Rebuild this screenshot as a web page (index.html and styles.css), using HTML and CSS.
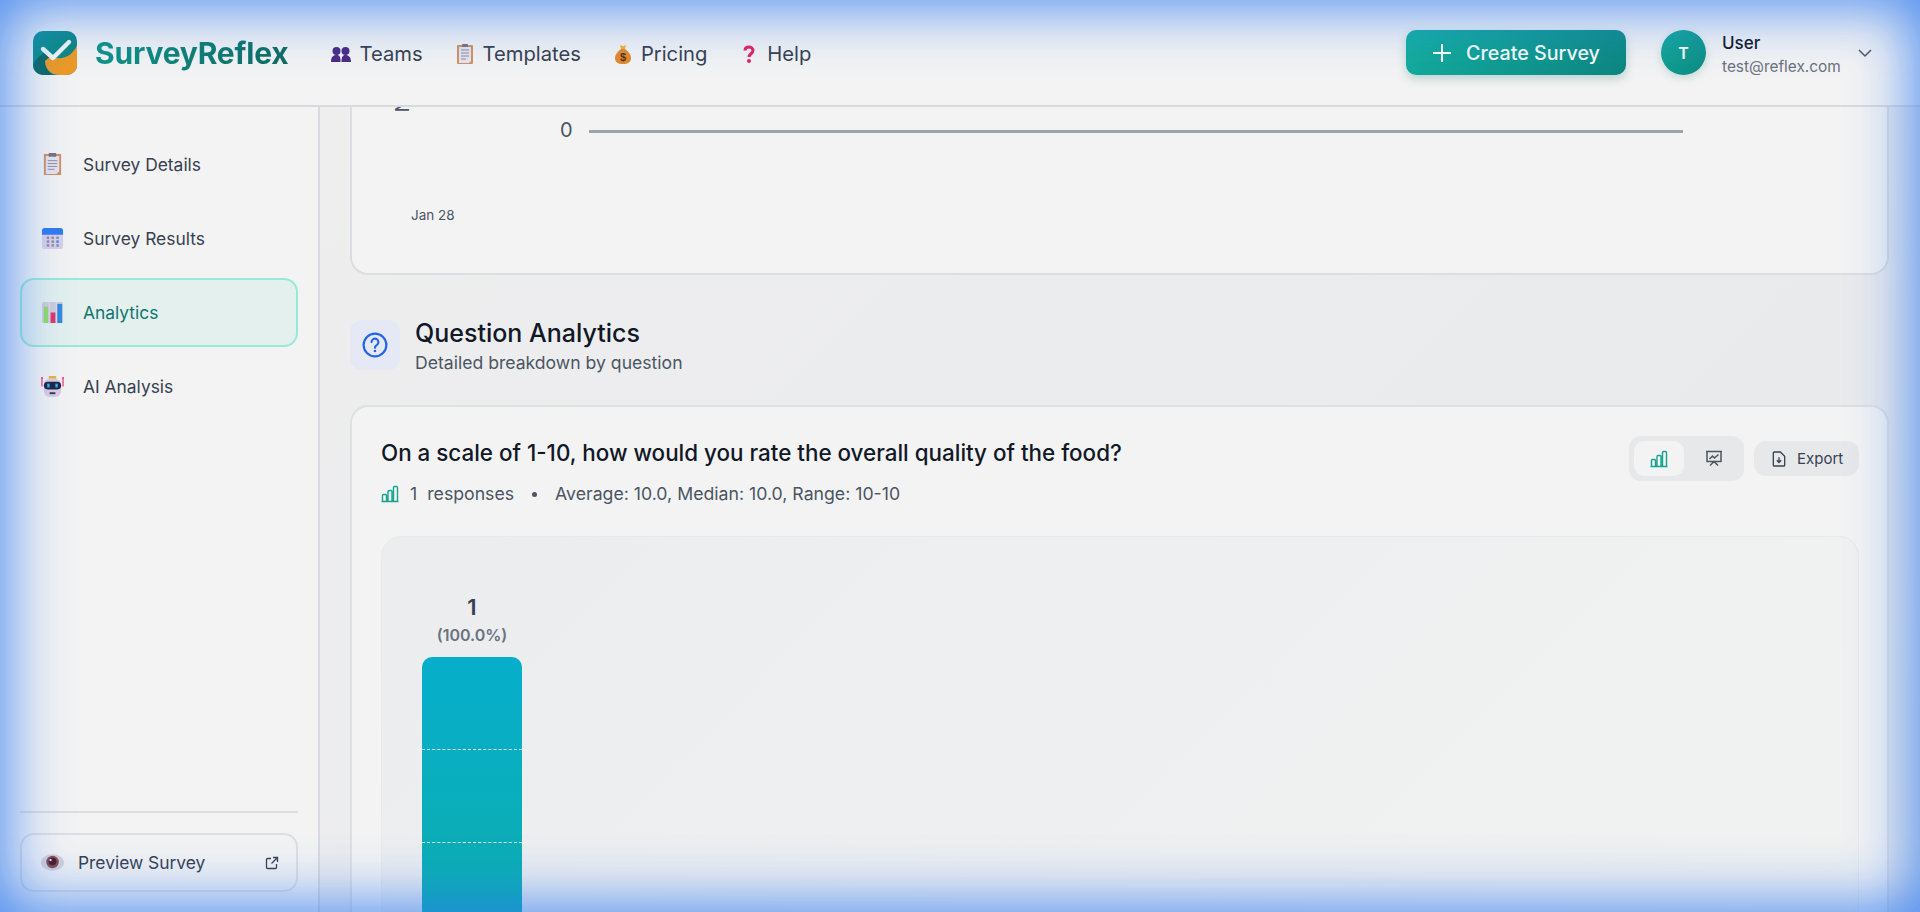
FILE: index.html
```html
<!DOCTYPE html>
<html lang="en">
<head>
<meta charset="utf-8">
<title>SurveyReflex</title>
<link rel="stylesheet" href="styles.css">
</head>
<body>
<div class="app">
  <header class="header">
    <a class="brand">
      <svg class="logo" viewBox="0 0 44 44">
        <defs><linearGradient id="lg" x1="0" y1="0" x2="1" y2="1"><stop offset="0" stop-color="#0a9490"/><stop offset="1" stop-color="#0f7f74"/></linearGradient></defs>
        <rect width="44" height="44" rx="10" fill="url(#lg)"/>
        <path d="M0 34C4 26 10 21 17 20L14 35C14 40 18 44 22 44H10A10 10 0 0 1 0 34Z" fill="#0b6862"/>
        <path d="M44 14C40 24 32 28 24 27C19 26 15 26 12 30C12 38 18 44 26 44H34A10 10 0 0 0 44 34Z" fill="#ee9a24"/>
        <path d="M10 18L20 27L36 11" fill="none" stroke="#f4f8f7" stroke-width="4.400" stroke-linecap="round" stroke-linejoin="round"/>
      </svg>
      <span class="brand-name">SurveyReflex</span>
    </a>
    <nav class="nav">
      <a class="nav-link">
        <svg class="em" viewBox="0 0 20 20"><g fill="#4b2a86"><circle cx="5.500" cy="7" r="4"/><circle cx="14.500" cy="7" r="4"/><path d="M0 18c0-5 2-7 5.500-7S9.500 13 9.500 18z"/><path d="M10.500 18c0-5 1-7 4-7S20 13 20 18z"/></g></svg>
        <span>Teams</span>
      </a>
      <a class="nav-link">
        <svg class="em" viewBox="0 0 20 20"><rect x="2" y="1" width="16" height="19" rx="1" fill="#d29163"/><path d="M4 3h12v14l-2 2H4z" fill="#e6e3ee"/><rect x="7" y="0" width="6" height="3" rx="1" fill="#77727f"/><path d="M6 6h8M6 9h8M6 12h8M6 15h5" stroke="#908c9a"/></svg>
        <span>Templates</span>
      </a>
      <a class="nav-link">
        <svg class="em" viewBox="0 0 20 20"><path d="M7 1l3 1.200L13 1l-1 4H8z" fill="#f2b02e"/><path d="M8 5h4c4 3 6 6 6 9 0 4-3 6-8 6s-8-2-8-6c0-3 2-6 6-9z" fill="#e08a2c"/><text x="10" y="16.500" class="bag">$</text></svg>
        <span>Pricing</span>
      </a>
      <a class="nav-link">
        <svg class="em" viewBox="0 0 20 20"><path d="M6 6.500C6 4 8 3 10 3s4 1.200 4 3.500c0 3-4 3.500-4 6.500" fill="none" stroke="#e5215f" stroke-width="3"/><circle cx="10" cy="17" r="2" fill="#e5215f"/></svg>
        <span>Help</span>
      </a>
    </nav>
    <div class="header-right">
      <button class="create">
        <svg class="plus" viewBox="0 0 20 20"><path d="M10 1v18M1 10h18" stroke="#fff" stroke-width="2" fill="none"/></svg>
        <span>Create Survey</span>
      </button>
      <div class="user">
        <div class="avatar">T</div>
        <div class="user-text">
          <div class="user-name">User</div>
          <div class="user-mail">test@reflex.com</div>
        </div>
        <svg class="chev" viewBox="0 0 16 10"><path d="M2 2l6 6 6-6" fill="none" stroke="#4b5563" stroke-width="1.500"/></svg>
      </div>
    </div>
  </header>

  <div class="body">
    <aside class="sidebar">
      <div class="side-list">
        <a class="side-item">
          <svg class="side-em" viewBox="0 0 24 24"><rect x="3" y="1" width="18" height="22" fill="#d29163"/><path d="M5 3h14v16l-3 3H5z" fill="#e6e3ee"/><rect x="8" y="0" width="8" height="4" rx="1" fill="#77727f"/><path d="M7 8h10M7 11h10M7 14h10M7 17h7" stroke="#908c9a"/></svg>
          <span>Survey Details</span>
        </a>
        <a class="side-item">
          <svg class="side-em" viewBox="0 0 24 24"><rect x="1" y="1" width="22" height="22" rx="3" fill="#d8d0e8"/><path d="M1 8V4a3 3 0 0 1 3-3h16a3 3 0 0 1 3 3v4z" fill="#2f7cf0"/><g fill="#8f8a9c"><rect x="6" y="10" width="2.500" height="2.500"/><rect x="11" y="10" width="2.500" height="2.500"/><rect x="6" y="14" width="2.500" height="2.500"/><rect x="11" y="14" width="2.500" height="2.500"/><rect x="6" y="18" width="2.500" height="2.500"/><rect x="11" y="18" width="2.500" height="2.500"/><rect x="16" y="10" width="2.500" height="2.500"/><rect x="16" y="18" width="2.500" height="2.500"/></g><rect x="16" y="14" width="2.500" height="2.500" fill="#2f8cf0"/></svg>
          <span>Survey Results</span>
        </a>
        <a class="side-item active">
          <svg class="side-em" viewBox="0 0 24 24"><rect x="1" y="1" width="22" height="22" rx="2" fill="#cfccd8"/><path d="M8.500 1v22M16 1v22" stroke="#e2e0e8"/><rect x="3" y="6" width="4.500" height="17" fill="#8fdc6a"/><rect x="10" y="12" width="5" height="11" fill="#e0356f"/><rect x="17" y="3" width="5" height="20" fill="#2f8ae0"/></svg>
          <span>Analytics</span>
        </a>
        <a class="side-item">
          <svg class="side-em" viewBox="0 0 24 24"><path d="M1 3v9M23 3v9" stroke="#ee2f70" stroke-width="1.200"/><circle cx="1" cy="3" r="1" fill="#ee2f70"/><circle cx="23" cy="3" r="1" fill="#ee2f70"/><rect x="8" y="1" width="8" height="3" rx="1" fill="#eeb52c"/><rect x="3" y="4" width="18" height="19" rx="6" fill="#d9cfe0"/><rect x="3" y="7" width="18" height="8" rx="4" fill="#23233f"/><rect x="6.500" y="9" width="2.500" height="4" fill="#2fb6f0"/><rect x="15" y="9" width="2.500" height="4" fill="#2fb6f0"/><rect x="9" y="18" width="6" height="2" fill="#3a3450"/></svg>
          <span>AI Analysis</span>
        </a>
      </div>
      <div class="side-foot">
        <a class="preview">
          <svg class="side-em" viewBox="0 0 24 18"><ellipse cx="12" cy="9" rx="12" ry="8.500" fill="#d5d2dc"/><circle cx="12" cy="8.500" r="6.500" fill="#8a4a46"/><circle cx="12" cy="8" r="4" fill="#4a1626"/><circle cx="10" cy="6.500" r="1.200" fill="#fff"/></svg>
          <span class="preview-text">Preview Survey</span>
          <svg class="ext" viewBox="0 0 14 14"><path d="M6 2.500H2.500a1 1 0 0 0-1 1v8a1 1 0 0 0 1 1h8a1 1 0 0 0 1-1V8M8 1.500h4.500V6M12.500 1.500L6.500 7.500" fill="none" stroke="#374151" stroke-width="1.300"/></svg>
        </a>
      </div>
    </aside>

    <main class="main">
      <section class="chart-card">
        <span class="axis-title">N</span>
        <div class="zero-row">
          <span class="zero">0</span>
          <span class="zero-line"></span>
        </div>
        <div class="tick">Jan 28</div>
      </section>

      <div class="section-head">
        <div class="section-icon">
          <svg viewBox="0 0 24 24" class="q-icon"><circle cx="12" cy="12" r="10.500" fill="none" stroke="#2563eb" stroke-width="2"/><path d="M8.800 9.300a3.200 3.200 0 1 1 4.800 2.800c-1 .6-1.600 1.200-1.600 2.400" fill="none" stroke="#2563eb" stroke-width="2" stroke-linecap="round"/><circle cx="12" cy="17.500" r="1.200" fill="#2563eb"/></svg>
        </div>
        <div>
          <h2 class="section-title">Question Analytics</h2>
          <p class="section-sub">Detailed breakdown by question</p>
        </div>
      </div>

      <section class="q-card">
        <div class="q-head">
          <div class="q-info">
            <h3 class="q-title">On a scale of 1-10, how would you rate the overall quality of the food?</h3>
            <div class="q-meta">
              <svg class="meta-icon" viewBox="0 0 18 18"><path d="M1.500 16.500v-6a1 1 0 0 1 1-1h2a1 1 0 0 1 1 1v6zM7 16.500V6.500a1 1 0 0 1 1-1h2a1 1 0 0 1 1 1v10zM12.500 16.500V2.500a1 1 0 0 1 1-1h2a1 1 0 0 1 1 1v14zM0.500 16.500h17" fill="none" stroke="#14a38f" stroke-width="1.400"/></svg>
              <span class="count">1</span>
              <span>responses</span>
              <span class="dot"></span>
              <span>Average: 10.0, Median: 10.0, Range: 10-10</span>
            </div>
          </div>
          <div class="q-actions">
            <div class="toggle">
              <button class="toggle-btn on"><svg class="meta-icon" viewBox="0 0 18 18"><path d="M1.500 16.500v-6a1 1 0 0 1 1-1h2a1 1 0 0 1 1 1v6zM7 16.500V6.500a1 1 0 0 1 1-1h2a1 1 0 0 1 1 1v10zM12.500 16.500V2.500a1 1 0 0 1 1-1h2a1 1 0 0 1 1 1v14zM0.500 16.500h17" fill="none" stroke="#14a38f" stroke-width="1.400"/></svg></button>
              <button class="toggle-btn"><svg class="meta-icon" viewBox="0 0 18 18"><path d="M1 1.500h16M2 1.500v10h14v-10M5 15.500l4-4 4 4M4.500 9l3-3 2 2 4-3.500" fill="none" stroke="#4b5563" stroke-width="1.500"/></svg></button>
            </div>
            <button class="export">
              <svg class="exp-icon" viewBox="0 0 16 18"><path d="M2.500 1h7l5 5v10a1 1 0 0 1-1 1h-11a1 1 0 0 1-1-1V2a1 1 0 0 1 1-1z" fill="none" stroke="#374151" stroke-width="1.500"/><path d="M8 7v6M5.500 10.500L8 13l2.500-2.500" fill="none" stroke="#374151" stroke-width="1.500"/></svg>
              <span>Export</span>
            </button>
          </div>
        </div>

        <div class="panel">
          <div class="bar-col">
            <div class="bar-count">1</div>
            <div class="bar-pct">(100.0%)</div>
            <div class="bar">
              <div class="seg"></div>
              <div class="seg"></div>
              <div class="seg"></div>
            </div>
          </div>
        </div>
      </section>
    </main>
  </div>
</div>
<div class="glow"></div>
</body>
</html>
```

FILE: styles.css
```css
* { box-sizing: border-box; }
html, body { margin: 0; height: 912px; overflow: hidden; }
body { font-family: Inter, "Noto Sans", sans-serif; color: #1f2937; background: #eaebed; }
h2, h3, p { margin: 0; }
button { font: inherit; border: 0; cursor: pointer; }

.app { display: flex; flex-direction: column; height: 912px; }

.header { height: 107px; flex: none; display: flex; align-items: center; padding: 0 47px 0 33px; background: #f3f3f3; border-bottom: 2px solid #d9dae0; position: relative; z-index: 2; }
.brand { display: flex; align-items: center; gap: 18px; }
.logo { width: 44px; height: 44px; flex: none; }
.brand-name { font-size: 30px; font-weight: 700; letter-spacing: -0.2px; background: linear-gradient(90deg, #0d9488, #0f6b60); -webkit-background-clip: text; background-clip: text; color: transparent; }
.nav { display: flex; gap: 32px; margin-left: 43px; padding-top: 2px; }
.nav-link { display: flex; align-items: center; gap: 8px; font-size: 20.200px; color: #374151; }
.em { width: 20px; height: 20px; flex: none; }
.bag { font: 700 11px "Liberation Sans", sans-serif; fill: #5e3210; text-anchor: middle; }
.header-right { margin-left: auto; display: flex; align-items: center; gap: 35px; }
.create { width: 220px; height: 45px; display: flex; align-items: center; justify-content: center; gap: 14px; border-radius: 10px; color: #f4fbfa; font-size: 19.700px; font-weight: 500; background: linear-gradient(135deg, #14b0a0, #0d8580); box-shadow: 0 4px 10px rgba(13, 120, 110, .25); }
.plus { width: 20px; height: 20px; }
.user { display: flex; align-items: center; gap: 16px; }
.avatar { width: 45px; height: 45px; border-radius: 50%; display: flex; align-items: center; justify-content: center; background: linear-gradient(135deg, #14ab9b, #0d8a80); color: #fff; font-size: 16px; font-weight: 600; box-shadow: 0 3px 8px rgba(13, 120, 110, .2); }
.user-text { width: 119px; padding-top: 4px; }
.user-name { font-size: 17px; font-weight: 550; color: #111827; line-height: 22px; }
.user-mail { font-size: 15.400px; color: #6b7280; line-height: 22px; margin-top: 2px; }
.chev { width: 16px; height: 10px; }

.body { flex: 1; display: flex; min-height: 0; }

.sidebar { width: 320px; flex: none; display: flex; flex-direction: column; justify-content: space-between; padding: 23px 20px 20px; background: #f3f3f3; border-right: 2px solid #d9dae0; }
.side-list { display: flex; flex-direction: column; gap: 5px; }
.side-item { height: 69px; display: flex; align-items: center; gap: 19px; padding: 0 19px; border: 2px solid transparent; border-radius: 14px; font-size: 17.400px; font-weight: 400; color: #374151; }
.side-item.active { background: #e4f0ee; border-color: #99e9d9; color: #0f766e; }
.side-em { width: 23px; height: 23px; flex: none; }
.side-foot { border-top: 2px solid #dcdde2; padding-top: 20px; }
.preview { height: 59px; display: flex; align-items: center; padding: 0 17px 0 19px; border: 2px solid #dcdfe6; border-radius: 14px; font-size: 17.400px; font-weight: 400; color: #374151; }
.preview-text { margin-left: 14px; flex: 1; }
.ext { width: 14px; height: 14px; }

.main { flex: 1; min-width: 0; padding: 0 31px 0 30px; overflow: hidden; background: linear-gradient(135deg, #eeeeef, #e8e9eb); }

.chart-card { position: relative; height: 168px; background: #f3f3f3; border: 2px solid #dcdde2; border-top: 0; border-radius: 0 0 18px 18px; padding: 11px 0 0 0; overflow: hidden; }
.axis-title { position: absolute; left: 43px; top: -12px; font-size: 18px; color: #4b5563; transform: rotate(90deg); }
.zero-row { display: flex; align-items: center; padding-left: 208px; gap: 16px; }
.zero { font-size: 20px; color: #4b5563; line-height: 24px; }
.zero-line { width: 1094px; height: 3px; margin-top: 2px; background: #9ca3af; }
.tick { margin: 63px 0 0 59px; font-size: 13.500px; color: #4b5563; line-height: 20px; }

.section-head { display: flex; align-items: flex-start; gap: 15px; margin-top: 45px; }
.section-icon { width: 50px; height: 50px; display: flex; align-items: center; justify-content: center; border-radius: 12px; background: #e4e9f5; }
.q-icon { width: 26px; height: 26px; }
.section-title { font-size: 25px; font-weight: 550; color: #111827; line-height: 26px; }
.section-sub { font-size: 17.600px; color: #4b5563; line-height: 22px; margin-top: 6px; }

.q-card { margin-top: 31px; background: #f3f3f3; border: 2px solid #dfe0e4; border-radius: 18px; padding: 29px 28px 40px 29px; }
.q-head { display: flex; justify-content: space-between; align-items: flex-start; }
.q-title { font-size: 22.400px; font-weight: 550; color: #111827; line-height: 34px; }
.q-meta { display: flex; align-items: center; margin-top: 12px; font-size: 17.700px; color: #4b5563; line-height: 24px; }
.meta-icon { width: 18px; height: 18px; flex: none; }
.count { margin: 0 10px 0 11px; }
.dot { width: 5px; height: 5px; border-radius: 50%; background: #4b5563; margin: 0 18px; }
.q-actions { display: flex; align-items: flex-start; gap: 10px; }
.toggle { display: flex; gap: 5px; padding: 5px; border-radius: 12px; background: #e7e8ea; }
.toggle-btn { width: 50px; height: 35px; display: flex; align-items: center; justify-content: center; border-radius: 10px; background: transparent; padding: 0; }
.toggle-btn.on { background: #f3f3f3; }
.export { width: 105px; height: 35px; margin-top: 5px; display: flex; align-items: center; gap: 11px; padding: 0 0 0 18px; border-radius: 12px; background: #e7e8ea; color: #374151; font-size: 15px; }
.exp-icon { width: 14px; height: 16px; flex: none; }

.panel { margin-top: 30px; height: 520px; padding: 57px 40px 0; border: 1px solid #e8e9eb; border-radius: 20px; background: linear-gradient(135deg, #ecedef, #f1f2f1); }
.bar-col { width: 100px; display: flex; flex-direction: column; align-items: center; }
.bar-count { font-size: 22px; font-weight: 600; color: #374151; line-height: 26px; }
.bar-pct { font-size: 16px; font-weight: 600; color: #6b7280; line-height: 20px; margin-top: 5px; }
.bar { width: 100px; height: 400px; margin-top: 12px; border-radius: 10px 10px 0 0; overflow: hidden; background: linear-gradient(180deg, #06aecb, #0eaeaa 80%, #0d9488); }
.seg { height: 93px; border-bottom: 1px dashed #eaf6f6; }

.glow { position: fixed; inset: 0; pointer-events: none; z-index: 10; box-shadow: inset 0 0 60px 6px rgba(45, 120, 240, .85); }
```
